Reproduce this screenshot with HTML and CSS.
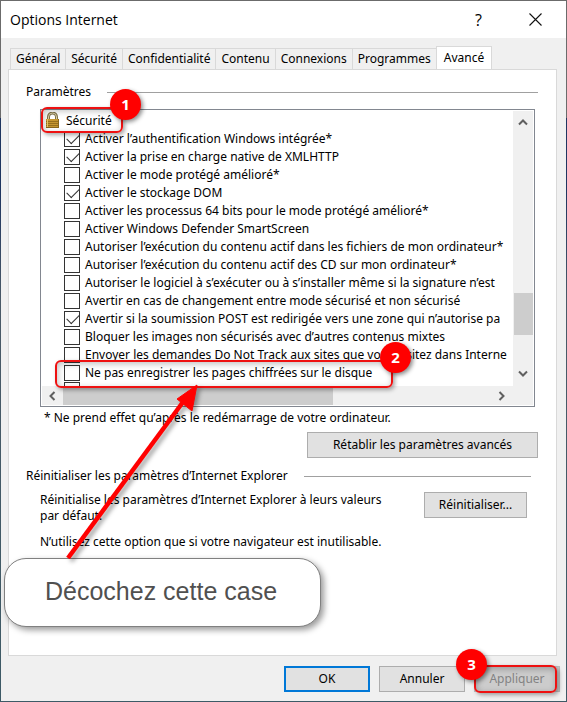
FILE: index.html
```html
<!DOCTYPE html>
<html lang="fr">

<head>
    <meta charset="UTF-8">
    <meta name="viewport" content="width=device-width, initial-scale=1.0">
    <title>Options Internet</title>
    <link rel="stylesheet" href="styles.css">
</head>

<body>
    <div class="window">
        <header class="titlebar">
            <h1>Options Internet</h1>
            <button class="caption" type="button" aria-label="Aide">?</button>
            <button class="caption" type="button" aria-label="Fermer">
                <svg width="13" height="13" viewBox="0 0 13 13">
                    <path d="M0.5 0.5L12.5 12.5M12.5 0.5L0.5 12.5" fill="none" stroke="#111" stroke-width="1.1" />
                </svg>
            </button>
        </header>

        <nav class="tabs">
            <button type="button" class="tab">Général</button>
            <button type="button" class="tab">Sécurité</button>
            <button type="button" class="tab">Confidentialité</button>
            <button type="button" class="tab">Contenu</button>
            <button type="button" class="tab">Connexions</button>
            <button type="button" class="tab">Programmes</button>
            <button type="button" class="tab active">Avancé</button>
        </nav>

        <main class="panel">
            <section class="settings">
                <h2 class="legend">Paramètres</h2>
                <div class="tree">
                    <div class="view">
                        <ul class="list">
                            <li class="group">
                                <svg class="lock" width="15" height="17" viewBox="0 0 15 17">
                                    <path d="M3.5 8V5a4 4 0 0 1 8 0v3" fill="none" stroke="#7d7048" stroke-width="3" />
                                    <path d="M3.5 8V5a4 4 0 0 1 8 0v3" fill="none" stroke="#d8cfa8" stroke-width="1" />
                                    <rect x="1" y="7" width="13" height="9" fill="#c6962f" />
                                    <path d="M1 9.5h13M1 11.5h13M1 13.5h13" stroke="#97701c" />
                                    <path d="M2.5 7v9" stroke="#ecc866" />
                                    <path d="M1 15.5h13M13.5 7v9" stroke="#8a661a" />
                                </svg>
                                Sécurité
                            </li>
                            <li><label><input type="checkbox" checked>Activer l’authentification Windows intégrée*</label></li>
                            <li><label><input type="checkbox" checked>Activer la prise en charge native de XMLHTTP</label></li>
                            <li><label><input type="checkbox">Activer le mode protégé amélioré*</label></li>
                            <li><label><input type="checkbox" checked>Activer le stockage DOM</label></li>
                            <li><label><input type="checkbox">Activer les processus 64 bits pour le mode protégé amélioré*</label></li>
                            <li><label><input type="checkbox">Activer Windows Defender SmartScreen</label></li>
                            <li><label><input type="checkbox">Autoriser l’exécution du contenu actif dans les fichiers de mon ordinateur*</label></li>
                            <li><label><input type="checkbox">Autoriser l’exécution du contenu actif des CD sur mon ordinateur*</label></li>
                            <li><label><input type="checkbox">Autoriser le logiciel à s’exécuter ou à s’installer même si la signature n’est</label></li>
                            <li><label><input type="checkbox">Avertir en cas de changement entre mode sécurisé et non sécurisé</label></li>
                            <li><label><input type="checkbox" checked>Avertir si la soumission POST est redirigée vers une zone qui n’autorise pa</label></li>
                            <li><label><input type="checkbox">Bloquer les images non sécurisés avec d’autres contenus mixtes</label></li>
                            <li><label><input type="checkbox">Envoyer les demandes Do Not Track aux sites que vous visitez dans Interne</label></li>
                            <li><label><input type="checkbox">Ne pas enregistrer les pages chiffrées sur le disque</label></li>
                            <li><input type="checkbox" aria-label="Option suivante"></li>
                        </ul>
                    </div>
                    <div class="vbar">
                        <svg width="10" height="7" viewBox="0 0 10 7"><path d="M1 5.5L5 1.5L9 5.5" /></svg>
                        <div class="vthumb"></div>
                        <svg width="10" height="7" viewBox="0 0 10 7"><path d="M1 1.5L5 5.5L9 1.5" /></svg>
                    </div>
                    <div class="hbar">
                        <svg width="7" height="10" viewBox="0 0 7 10"><path d="M5.5 1L1.5 5L5.5 9" /></svg>
                        <div class="hthumb"></div>
                        <svg width="7" height="10" viewBox="0 0 7 10"><path d="M1.5 1L5.5 5L1.5 9" /></svg>
                    </div>
                    <div class="mark mark-group"><span class="badge">1</span></div>
                    <div class="mark mark-option"><span class="badge">2</span></div>
                </div>
                <p class="note">* Ne prend effet qu’après le redémarrage de votre ordinateur.</p>
                <button type="button" class="btn restore">Rétablir les paramètres avancés</button>
            </section>

            <section class="reset">
                <h2 class="legend">Réinitialiser les paramètres d’Internet Explorer</h2>
                <div class="reset-row">
                    <p>Réinitialise les paramètres d’Internet Explorer à leurs valeurs<br>par défaut.</p>
                    <button type="button" class="btn">Réinitialiser...</button>
                </div>
                <p class="warning">N’utilisez cette option que si votre navigateur est inutilisable.</p>
            </section>

            <div class="callout">
                <svg class="arrow" width="150" height="180" viewBox="0 0 150 180">
                    <path d="M13 179L128 23" stroke="#f00" stroke-width="4.5" />
                    <path d="M142 6L122 20L137 32Z" fill="#f00" stroke="#f00" />
                </svg>
                Décochez cette case
            </div>
        </main>

        <footer class="actions">
            <button type="button" class="btn default">OK</button>
            <button type="button" class="btn">Annuler</button>
            <div class="apply">
                <button type="button" class="btn" disabled>Appliquer</button>
                <div class="mark mark-apply"><span class="badge">3</span></div>
            </div>
        </footer>
    </div>
</body>

</html>
```
FILE: styles.css
```css
* {
    margin: 0;
    padding: 0;
    box-sizing: border-box;
}

body {
    padding: 1px;
    min-height: 100vh;
    display: flex;
    background: linear-gradient(#6b6b6b 0 118px, #1f3560 118px 190px, #4a5a68 300px, #3d5a66);
    font: 12px/16px "Noto Sans", sans-serif;
    color: #000;
}

button,
input {
    font: inherit;
    color: inherit;
}

ul {
    list-style: none;
}

.window {
    flex: 1;
    min-width: 0;
    display: flex;
    flex-direction: column;
    background: #f0f0f0;
}

/* title bar */
.titlebar {
    height: 37px;
    padding-left: 9px;
    padding-right: 2px;
    display: flex;
    align-items: center;
    background: #fff;
}

.titlebar h1 {
    flex: 1;
    font: 14px/20px "Open Sans", sans-serif;
}

.caption {
    width: 57px;
    height: 36px;
    border: 0;
    background: none;
    font: 16px/20px "Open Sans", sans-serif;
}

/* tabs */
.tabs {
    height: 31px;
    padding-left: 9px;
    display: flex;
    align-items: flex-end;
}

.tab {
    height: 21px;
    padding: 0 5px;
    border: 1px solid #d9d9d9;
    border-bottom: 0;
    border-right: 0;
    background: #f0f0f0;
    white-space: nowrap;
}

.tab.active {
    height: 24px;
    padding: 0 7px 2px;
    margin-bottom: -1px;
    border-right: 1px solid #d9d9d9;
    background: #fff;
    position: relative;
}

/* panel */
.panel {
    flex: 1;
    margin: 0 9px 0 7px;
    padding: 14px 18px 0 17px;
    border: 1px solid #d9d9d9;
    background: #fff;
    position: relative;
}

.legend {
    display: flex;
    align-items: center;
    gap: 16px;
    font: inherit;
    white-space: nowrap;
}

.legend::after {
    content: "";
    flex: 1;
    height: 1px;
    background: #a0a0a0;
}

/* option tree */
.tree {
    height: 298px;
    margin: 9px 3px 0 14px;
    padding: 1px;
    border: 1px solid #828790;
    display: grid;
    grid-template-columns: 1fr 20px;
    grid-template-rows: 1fr 19px;
    position: relative;
}

.view {
    min-width: 0;
    overflow: hidden;
}

.list li {
    height: 18px;
    padding-left: 22px;
    white-space: nowrap;
}

.list .group {
    height: 19px;
    padding-left: 3px;
    display: flex;
    align-items: center;
    gap: 6px;
}

.list label {
    height: 18px;
    display: flex;
    align-items: center;
    gap: 5px;
}

.list input {
    appearance: none;
    flex: none;
    width: 16px;
    height: 16px;
    border: 1px solid #333;
    background: #fff;
    position: relative;
}

.list input:checked::after {
    content: "";
    position: absolute;
    left: 2px;
    top: 2px;
    width: 11px;
    height: 6px;
    border: solid #333;
    border-width: 0 0 1px 1px;
    transform: rotate(-45deg);
}

.vbar,
.hbar {
    display: flex;
    align-items: center;
    background: #f0f0f0;
}

.vbar {
    flex-direction: column;
    padding: 8px 0 9px;
}

.hbar {
    grid-column: 1 / 3;
    padding: 0 28px 0 7px;
}

.vbar path,
.hbar path {
    fill: none;
    stroke: #606060;
    stroke-width: 2;
}

.vthumb {
    width: 19px;
    height: 42px;
    margin: auto 0 35px;
    background: #cdcdcd;
}

.hthumb {
    width: 270px;
    height: 18px;
    margin: 0 auto 0 7px;
    background: #cdcdcd;
}

.note {
    padding: 3px 0 0 18px;
}

/* buttons */
.btn {
    height: 26px;
    min-width: 86px;
    padding: 0 10px;
    border: 1px solid #adadad;
    background: #e1e1e1;
    white-space: nowrap;
}

.btn.default {
    border: 2px solid #0078d7;
}

.btn:disabled {
    border-color: #bfbfbf;
    background: #ccc;
    color: #838383;
}

.restore {
    width: 231px;
    margin: 6px 0 0 auto;
    display: block;
}

.reset {
    margin-top: 10px;
    padding-right: 7px;
}

.reset-row {
    padding: 8px 4px 0 14px;
    display: flex;
    align-items: flex-start;
    justify-content: space-between;
}

.reset-row .btn {
    width: 103px;
}

.warning {
    padding: 10px 0 0 14px;
}

/* annotations */
.mark {
    position: absolute;
    border: 2px solid #ee1111;
    border-radius: 6px;
    box-shadow: 2px 2px 4px rgba(0, 0, 0, 0.35), inset 1px 2px 6px rgba(0, 0, 0, 0.25);
    pointer-events: none;
}

.mark-group {
    left: 0;
    top: -3px;
    width: 82px;
    height: 26px;
}

.mark-option {
    left: 14px;
    top: 250px;
    width: 338px;
    height: 28px;
}

.mark-apply {
    left: 0;
    top: -1px;
    width: 83px;
    height: 28px;
}

.badge {
    position: absolute;
    top: -20px;
    right: -20px;
    width: 31px;
    height: 31px;
    border-radius: 50%;
    background: #f00;
    box-shadow: 2px 2px 4px rgba(0, 0, 0, 0.45);
    color: #fff;
    font: bold 15px/31px "Open Sans", "Noto Sans", sans-serif;
    text-align: center;
}

.mark-apply .badge {
    right: auto;
    left: -20px;
    top: -18px;
}

.callout {
    position: absolute;
    left: -5px;
    top: 488px;
    width: 317px;
    height: 69px;
    padding-left: 40px;
    border: 1px solid #808080;
    border-radius: 22px;
    background: #fff;
    box-shadow: 3px 3px 6px rgba(0, 0, 0, 0.4);
    color: #505050;
    font: 25px/64px "Liberation Sans", sans-serif;
}

.arrow {
    position: absolute;
    left: 50px;
    bottom: 67px;
    filter: drop-shadow(3px 3px 2px rgba(0, 0, 0, 0.35));
}

/* bottom buttons */
.actions {
    padding: 10px 6px 9px;
    display: flex;
    justify-content: flex-end;
    gap: 9px;
}

.apply {
    position: relative;
}
```
